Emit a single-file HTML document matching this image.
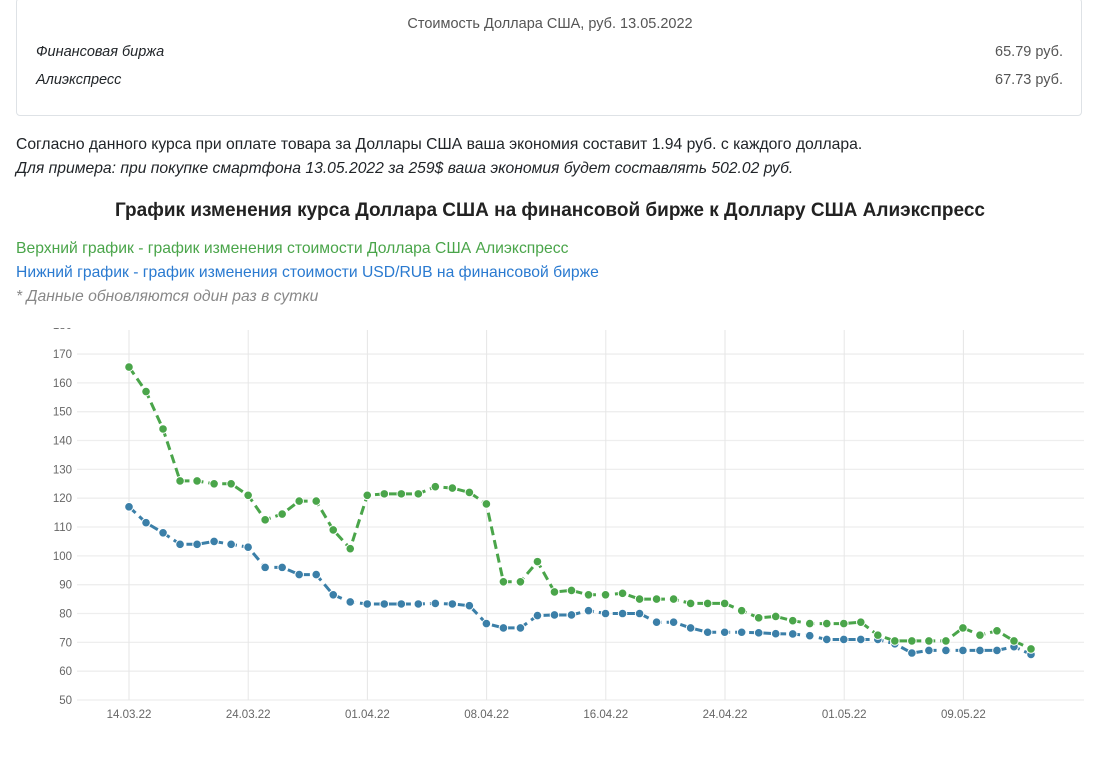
<!DOCTYPE html>
<html><head><meta charset="utf-8"><style>
body{margin:0;background:#fff;font-family:"Liberation Sans","DejaVu Sans",sans-serif;color:#212529;width:1100px;height:758px;overflow:hidden;position:relative}
.box{position:absolute;left:16px;top:-2px;width:1066px;height:118px;border:1px solid #dee2e6;border-radius:4px;box-sizing:border-box;z-index:2}
.t{position:absolute;font-size:14.5px;white-space:nowrap;z-index:2}
.w{font-size:15.7px}
</style></head><body>
<svg id="c" width="1100" height="758" style="position:absolute;left:0;top:0;z-index:0" xmlns="http://www.w3.org/2000/svg"></svg>
<div class="box"></div>
<div class="t" style="left:0;width:1100px;text-align:center;top:16px;color:#555">Стоимость Доллара США, руб. 13.05.2022</div>
<div class="t" style="left:36px;top:44px;font-style:italic">Финансовая биржа</div>
<div class="t" style="right:37px;top:44px;color:#555">65.79 руб.</div>
<div class="t" style="left:36px;top:72px;font-style:italic">Алиэкспресс</div>
<div class="t" style="right:37px;top:72px;color:#555">67.73 руб.</div>
<div class="t w" style="left:16px;top:136px">Согласно данного курса при оплате товара за Доллары США ваша экономия составит 1.94 руб. с каждого доллара.</div>
<div class="t w" style="left:16px;top:160px;font-style:italic">Для примера: при покупке смартфона 13.05.2022 за 259$ ваша экономия будет составлять 502.02 руб.</div>
<div class="t" style="left:0;width:1100px;text-align:center;top:200px;font-size:19px;font-weight:bold;color:#222">График изменения курса Доллара США на финансовой бирже к Доллару США Алиэкспресс</div>
<div class="t w" style="left:16px;top:240px;color:#4aa54a">Верхний график - график изменения стоимости Доллара США Алиэкспресс</div>
<div class="t w" style="left:16px;top:264px;color:#2a7ad0">Нижний график - график изменения стоимости USD/RUB на финансовой бирже</div>
<div class="t w" style="left:16px;top:288px;color:#888;font-style:italic">* Данные обновляются один раз в сутки</div>
<script>
var g=[165.5,157,144,126,126,125,125,121,112.5,114.5,119,119,109,102.5,121,121.5,121.5,121.5,124,123.5,122,118,91,91,98,87.5,88,86.5,86.5,87,85,85,85,83.5,83.5,83.5,81,78.5,79,77.5,76.5,76.5,76.5,77,72.5,70.5,70.5,70.5,70.5,75,72.5,74,70.5,67.7];
var b=[117,111.5,108,104,104,105,104,103,96,96,93.5,93.5,86.5,84,83.3,83.3,83.3,83.3,83.5,83.3,82.7,76.5,75,75,79.3,79.5,79.5,81,80,80,80,77,77,75,73.5,73.5,73.5,73.3,73,72.9,72.3,71,71,71,71,69.5,66.3,67.2,67.2,67.2,67.2,67.2,68.5,65.8];
function Y(v){return 700-(v-50)*2.883}
function X(i){return 129+i*(1031-129)/53}
var s='';
for(var v=50;v<=180;v+=10){var y=Y(v);s+='<line x1="77" x2="1084" y1="'+y+'" y2="'+y+'" stroke="#eee" stroke-width="1.3"/>';s+='<text x="72" y="'+(y+4)+'" text-anchor="end" font-size="11.5" fill="#666" font-family="Liberation Sans">'+v+'</text>';}
var L=['14.03.22','24.03.22','01.04.22','08.04.22','16.04.22','24.04.22','01.05.22','09.05.22'];
for(var i=0;i<8;i++){var x=129+i*119.2;s+='<line x1="'+x+'" x2="'+x+'" y1="330" y2="700" stroke="#e6e6e6"/>';s+='<text x="'+x+'" y="718" text-anchor="middle" font-size="11.5" fill="#666" font-family="Liberation Sans">'+L[i]+'</text>';}
function ser(a,c){var p='';for(var i=0;i<a.length;i++)p+=(i?'L':'M')+X(i).toFixed(1)+' '+Y(a[i]).toFixed(1);var o='<path d="'+p+'" fill="none" stroke="'+c+'" stroke-width="3" stroke-dasharray="9,5" stroke-linejoin="round"/>';for(var i=0;i<a.length;i++)o+='<circle cx="'+X(i)+'" cy="'+Y(a[i])+'" r="4.3" fill="'+c+'" stroke="#fff" stroke-width="1"/>';return o}
s+='<rect x="0" y="0" width="1100" height="328" fill="#fff"/>';
s+=ser(b,'#3b7fa8')+ser(g,'#4aa54a');
document.getElementById('c').innerHTML=s;
</script>
</body></html>
